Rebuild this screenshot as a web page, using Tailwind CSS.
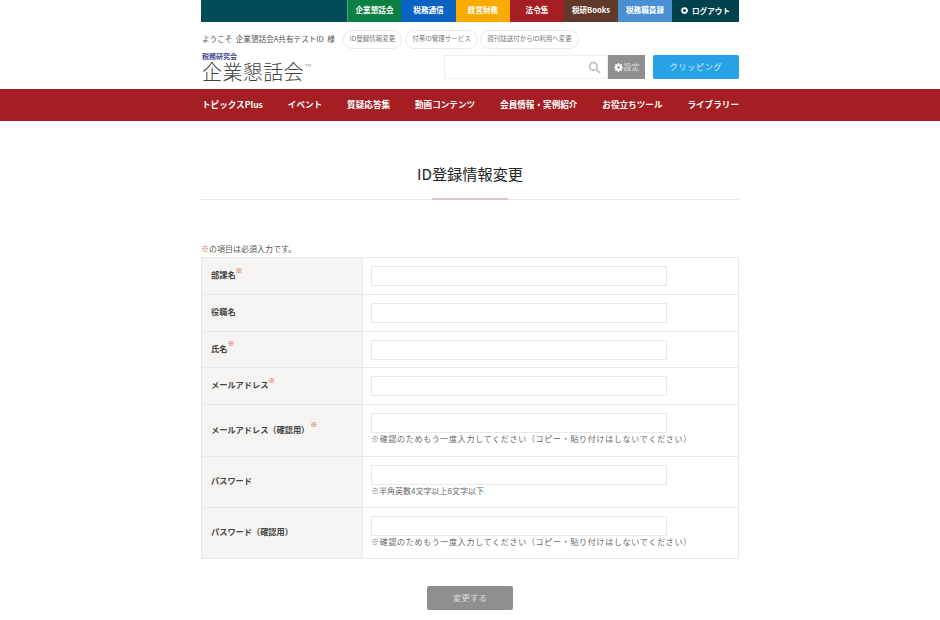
<!DOCTYPE html>
<html lang="ja"><head><meta charset="utf-8">
<script src="https://cdn.jsdelivr.net/npm/@tailwindcss/browser@4"></script>
</head>
<body class="bg-white font-['Noto_Sans_CJK_JP','Inter',sans-serif] text-[#444]">
<div class="h-[620px] overflow-hidden">
<div class="w-[538px] mx-auto">
  <div class="h-[22px] flex bg-[#004c57] text-white text-[7.6px] font-bold leading-[20px] text-center">
    <div class="w-[146px]"></div>
    <div class="w-[54px] bg-[#0b8043] border-l border-white/30">企業懇話会</div>
    <div class="w-[55px] bg-[#0a62c2]">税務通信</div>
    <div class="w-[54px] bg-[#fbaa00]">経営財務</div>
    <div class="w-[54px] bg-[#a51e24]">法令集</div>
    <div class="w-[54px] bg-[#61392b]">税研Books</div>
    <div class="w-[54px] bg-[#4a8fd2]">税務職員録</div>
    <div class="w-[67px] bg-[#00424d] flex items-center justify-center gap-1 pb-[1px]">
      <svg width="7" height="7" viewBox="0 0 10 10"><circle cx="5" cy="5" r="3.5" fill="none" stroke="#fff" stroke-width="2.6"/></svg>
      <span>ログアウト</span>
    </div>
  </div>
  <div class="h-[33px] flex items-center pt-[1px]">
    <span class="w-[142px] pl-[1px] text-[#555] text-[7.6px] whitespace-nowrap">ようこそ&nbsp; 企業懇話会A共有テストID&nbsp; 様</span>
    <div class="flex text-[6.5px] text-[#777]">
      <span class="h-[19px] w-[59px] leading-[15px] text-center border border-[#e8e8e8] rounded-full whitespace-nowrap">ID登録情報変更</span>
      <span class="ml-[3px] h-[19px] w-[73px] leading-[15px] text-center border border-[#e8e8e8] rounded-full whitespace-nowrap">付帯ID管理サービス</span>
      <span class="ml-[2px] h-[19px] w-[99px] leading-[15px] text-center border border-[#e8e8e8] rounded-full whitespace-nowrap">週刊誌送付からID利用へ変更</span>
    </div>
  </div>
  <div class="h-[34px] flex items-start">
    <div class="w-[243px] pl-[1px]">
      <div class="text-[7px] leading-[7px] text-[#3d4a8f] font-bold -mt-[2px]">税務研究会</div>
      <div class="text-[20px] leading-[20px] mt-[2px] text-[#444] font-light tracking-[0.4px] flex items-start">企業懇話会<span class="text-[4px] leading-[6px] ml-[1px]">TM</span></div>
    </div>
    <div class="w-[164px] h-[24px] border border-[#eee] flex items-center justify-end pr-[6px]">
      <svg width="13" height="13" viewBox="0 0 24 24" fill="none" stroke="#c4c4c4" stroke-width="3.5"><circle cx="10" cy="10" r="7"/><path d="M15 15l7 7"/></svg>
    </div>
    <div class="w-[37px] h-[24px] bg-[#8f8f8f] text-[#ddd] text-[8px] flex items-center justify-center gap-[1px]">
      <svg width="9" height="9" viewBox="0 0 10 10"><circle cx="5" cy="5" r="2.8" fill="none" stroke="#fff" stroke-width="2.2"/><path d="M5 0v10M0 5h10M1.5 1.5l7 7M8.5 1.5l-7 7" stroke="#fff" stroke-width="1.4"/><circle cx="5" cy="5" r="1.4" fill="#8f8f8f"/></svg>
      <span>設定</span>
    </div>
    <div class="ml-[8px] w-[86px] h-[24px] bg-[#28a2e6] rounded-[2px] text-white/80 text-[8px] tracking-[0.8px] leading-[23px] text-center">クリッピング</div>
  </div>
</div>
<div class="h-[32px] bg-[#a51e24]">
  <div class="w-[538px] mx-auto pl-[1px] pb-[2px] h-full flex justify-between items-center text-white text-[8.6px] font-bold whitespace-nowrap">
    <span>トピックスPlus</span><span>イベント</span><span>質疑応答集</span><span>動画コンテンツ</span><span>会員情報・実例紹介</span><span>お役立ちツール</span><span>ライブラリー</span>
  </div>
</div>
<div class="w-[538px] mx-auto">
  <div class="h-[79px] border-b border-[#e8e8e8] relative pt-[40px] text-center">
    <h1 class="text-[15.2px] leading-[24px] text-[#222] font-normal">ID登録情報変更</h1>
    <div class="absolute left-[231px] bottom-[-1px] w-[76px] h-[2px] bg-[#dcc8cc]"></div>
  </div>
  <p class="mt-[43px] h-[14px] text-[8px] leading-[12px] text-[#555]"><span class="text-[#d04030] font-bold">※</span>の項目は必須入力です。</p>
  <div class="border border-[#e8e8e8] border-b-0 text-[8.2px] w-[538px]">
    <div class="flex h-[37px] border-b border-[#e8e8e8]">
      <div class="w-[161px] shrink-0 bg-[#f5f4f2] border-r border-[#eee] pl-[9px] pb-[3px] flex items-center font-bold text-[#444]">部課名<sup class="text-[#d04030] text-[7px] -mt-[3px] font-bold">※</sup></div>
      <div class="pl-[8px] pt-[8px]"><div class="w-[296px] h-[20px] border border-[#e8e8e8]"></div></div>
    </div>
    <div class="flex h-[37px] border-b border-[#e8e8e8]">
      <div class="w-[161px] shrink-0 bg-[#f5f4f2] border-r border-[#eee] pl-[9px] pb-[3px] flex items-center font-bold text-[#444]">役職名</div>
      <div class="pl-[8px] pt-[8px]"><div class="w-[296px] h-[20px] border border-[#e8e8e8]"></div></div>
    </div>
    <div class="flex h-[36px] border-b border-[#e8e8e8]">
      <div class="w-[161px] shrink-0 bg-[#f5f4f2] border-r border-[#eee] pl-[9px] pb-[3px] flex items-center font-bold text-[#444]">氏名<sup class="text-[#d04030] text-[7px] -mt-[3px] font-bold">※</sup></div>
      <div class="pl-[8px] pt-[8px]"><div class="w-[296px] h-[20px] border border-[#e8e8e8]"></div></div>
    </div>
    <div class="flex h-[37px] border-b border-[#e8e8e8]">
      <div class="w-[161px] shrink-0 bg-[#f5f4f2] border-r border-[#eee] pl-[9px] pb-[3px] flex items-center font-bold text-[#444]">メールアドレス<sup class="text-[#d04030] text-[7px] -mt-[3px] font-bold">※</sup></div>
      <div class="pl-[8px] pt-[8px]"><div class="w-[296px] h-[20px] border border-[#e8e8e8]"></div></div>
    </div>
    <div class="flex h-[52px] border-b border-[#e8e8e8]">
      <div class="w-[161px] shrink-0 bg-[#f5f4f2] border-r border-[#eee] pl-[9px] pb-[3px] flex items-center font-bold text-[#444]">メールアドレス（確認用）<sup class="text-[#d04030] text-[7px] -mt-[3px] font-bold ml-[1px]">※</sup></div>
      <div class="pl-[8px] pt-[8px]"><div class="w-[296px] h-[20px] border border-[#e8e8e8]"></div><p class="text-[8px] text-[#666] leading-[13px] -mt-[1px] tracking-[0.7px] whitespace-nowrap">※確認のためもう一度入力してください（コピー・貼り付けはしないでください）</p></div>
    </div>
    <div class="flex h-[51px] border-b border-[#e8e8e8]">
      <div class="w-[161px] shrink-0 bg-[#f5f4f2] border-r border-[#eee] pl-[9px] pb-[3px] flex items-center font-bold text-[#444]">パスワード</div>
      <div class="pl-[8px] pt-[8px]"><div class="w-[296px] h-[20px] border border-[#e8e8e8]"></div><p class="text-[8px] text-[#666] leading-[13px] -mt-[1px] whitespace-nowrap">※半角英数4文字以上8文字以下</p></div>
    </div>
    <div class="flex h-[51px] border-b border-[#e8e8e8]">
      <div class="w-[161px] shrink-0 bg-[#f5f4f2] border-r border-[#eee] pl-[9px] pb-[3px] flex items-center font-bold text-[#444]">パスワード（確認用）</div>
      <div class="pl-[8px] pt-[8px]"><div class="w-[296px] h-[20px] border border-[#e8e8e8]"></div><p class="text-[8px] text-[#666] leading-[13px] -mt-[1px] tracking-[0.7px] whitespace-nowrap">※確認のためもう一度入力してください（コピー・貼り付けはしないでください）</p></div>
    </div>
  </div>
  <div class="mt-[27px] mx-auto w-[86px] h-[24px] bg-[#8f8f8f] rounded-[2px] text-white/70 text-[8.5px] leading-[22px] text-center">変更する</div>
</div>
</div>
</body></html>
